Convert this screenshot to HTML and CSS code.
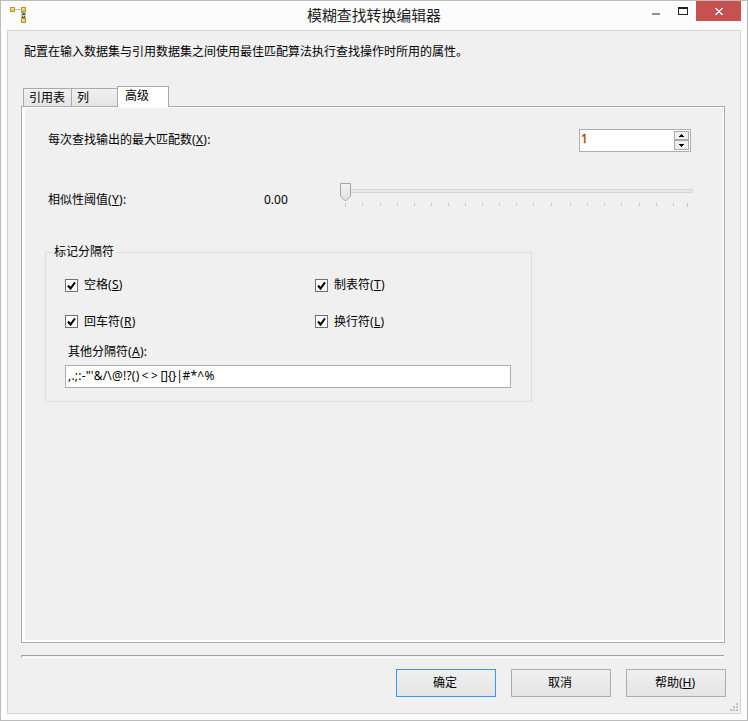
FILE: index.html
```html
<!DOCTYPE html>
<html lang="zh-CN">
<head>
<meta charset="utf-8">
<title>模糊查找转换编辑器</title>
<link rel="stylesheet" href="styles.css">
</head>
<body>
<div class="window">
  <header class="titlebar">
    <svg class="app-icon" width="18" height="18" viewBox="0 0 18 18" shape-rendering="crispEdges">
      <path d="M5 3.500h6" stroke="#c4c4c4"/>
      <path d="M11 6h5v6h-5z" fill="#c3cfc6"/>
      <path d="M12 6h1v1h-1zM13 7h2v1h-2zM12 8h3v1h-3zM12 10h1v1h-1zM14 10h1v1h-1zM12 11h3v1h-3z" fill="#3d664b"/>
      <g fill="#f5cc50" stroke="#bd963c"><path d="M.5 1.500h4v4h-4zM11.500 1.500h4v4h-4zM11.500 12.500h4v4h-4z"/></g>
      <path d="M1 2h2v1H1zM12 2h2v1h-2zM12 13h2v1h-2z" fill="#ffe991"/>
    </svg>
    <h1 class="title">模糊查找转换编辑器</h1>
    <div class="controls">
      <svg width="49" height="21" viewBox="0 0 49 21" shape-rendering="crispEdges">
        <path d="M5 12h8v2H5z" fill="#929292"/>
        <path d="M31 6h10v8H31zM32 8v5h8V8z" fill="#222326" fill-rule="evenodd"/>
      </svg>
      <div class="close">
        <svg width="8" height="7" viewBox="0 0 8 7" shape-rendering="crispEdges"><path fill="#fff" d="M0 0h2v1h1v1h2V1h1V0h2v1H7v1H6v1H5v1h1v1h1v1h1v1H6V6H5V5H3v1H2v1H0V6h1V5h1V4h1V3H2V2H1V1H0z"/></svg>
      </div>
    </div>
  </header>
  <main class="client">
    <p class="intro">配置在输入数据集与引用数据集之间使用最佳匹配算法执行查找操作时所用的属性。</p>
    <nav class="tabs">
      <div class="tab tab-ref">引用表</div>
      <div class="tab tab-col">列</div>
      <div class="tab tab-active">高级</div>
    </nav>
    <section class="page">
      <div class="match-row">
        <label>每次查找输出的最大匹配数<span class="key">(<u>X</u>):</span></label>
        <div class="spinner"><span class="spinner-value">1</span>
          <div class="arrows">
            <div class="arrow"><svg width="5" height="3" viewBox="0 0 5 3" shape-rendering="crispEdges"><path d="M2 0h1v1h1v1h1v1H0V2h1V1h1z"/></svg></div>
            <div class="arrow"><svg width="5" height="3" viewBox="0 0 5 3" shape-rendering="crispEdges"><path d="M0 0h5v1H4v1H3v1H2V2H1V1H0z"/></svg></div>
          </div>
        </div>
      </div>
      <div class="threshold-row">
        <label class="threshold-label">相似性阈值<span class="key">(<u>Y</u>):</span></label>
        <span class="threshold-value">0.00</span>
        <svg class="slider" width="354" height="26" viewBox="0 0 354 26">
          <defs><linearGradient id="thumb" x2="0" y2="1"><stop stop-color="#f2f2f2"/><stop offset="1" stop-color="#e2e2e2"/></linearGradient></defs>
          <path d="M5.500 7.500h347v3h-347z" fill="#e7eaea" stroke="#d3d6d5"/>
          <path d="M.5 1.500h10v12.500l-5 5-5-5z" fill="url(#thumb)" stroke="#a5a5a5"/>
          <path stroke="#c4c4c4" d="M5.500 21v4M22.500 21v3M40.500 21v3M57.500 21v3M74.500 21v3M91.500 21v3M108.500 21v3M125.500 21v3M142.500 21v3M159.500 21v3M176.500 21v3M193.500 21v3M211.500 21v3M230.500 21v3M247.500 21v3M264.500 21v3M281.500 21v3M299.500 21v3M316.500 21v3M333.500 21v3M347.500 21v4"/>
        </svg>
      </div>
      <div class="group">
        <span class="legend">标记分隔符</span>
        <div class="checks">
          <label class="check"><svg class="box" width="13" height="13" viewBox="0 0 13 13"><path d="M3 6.500l2.500 3L10 3.300" fill="none" stroke="#000" stroke-width="2"/></svg>空格<span class="key">(<u>S</u>)</span></label>
          <label class="check"><svg class="box" width="13" height="13" viewBox="0 0 13 13"><path d="M3 6.500l2.500 3L10 3.300" fill="none" stroke="#000" stroke-width="2"/></svg>制表符<span class="key">(<u>T</u>)</span></label>
          <label class="check check-low"><svg class="box" width="13" height="13" viewBox="0 0 13 13"><path d="M3 6.500l2.500 3L10 3.300" fill="none" stroke="#000" stroke-width="2"/></svg>回车符<span class="key">(<u>R</u>)</span></label>
          <label class="check check-low"><svg class="box" width="13" height="13" viewBox="0 0 13 13"><path d="M3 6.500l2.500 3L10 3.300" fill="none" stroke="#000" stroke-width="2"/></svg>换行符<span class="key">(<u>L</u>)</span></label>
        </div>
        <label class="other-label">其他分隔符<span class="key">(<u>A</u>):</span></label>
        <div class="field">,.;:-"'&amp;/\@!?()<span class="angles">&lt;&gt;</span><span class="brackets">[]{}|</span>#*^%</div>
      </div>
    </section>
    <div class="separator"></div>
    <footer class="buttons">
      <button class="button default">确定</button>
      <button class="button">取消</button>
      <button class="button">帮助(<u>H</u>)</button>
    </footer>
    <svg class="grip" width="8" height="8" viewBox="0 0 8 8" shape-rendering="crispEdges"><path fill="#bfbfbf" d="M6 0h2v2H6zM3 3h2v2H3zM6 3h2v2H6zM0 6h2v2H0zM3 6h2v2H3zM6 6h2v2H6z"/></svg>
  </main>
</div>
</body>
</html>
```
FILE: styles.css
```css
* { box-sizing: border-box; }
body {
  margin: 0;
  overflow: hidden;
  font: 12px/16px "Noto Sans", "Noto Sans CJK SC", sans-serif;
  color: #000;
}
svg { display: block; flex: none; }
u { text-underline-offset: 1px; text-decoration-thickness: 1px; text-decoration-skip-ink: none; }
.key { letter-spacing: 0.3px; }
.window {
  width: 748px;
  height: 721px;
  border: 1px solid #bbb;
  background: #fcfcfc;
}
.titlebar {
  display: grid;
  grid-template-columns: 99px 1fr 99px;
  height: 29px;
}
.app-icon { margin: 5px 0 0 9px; }
.title {
  margin: 4px 0 0;
  font-size: 14.9px;
  line-height: 20px;
  font-weight: 400;
  text-align: center;
  color: #222;
}
.controls { display: flex; margin-left: -1px; width: 99px; }
.close {
  display: flex;
  align-items: center;
  justify-content: center;
  flex: none;
  width: 45px;
  height: 20px;
  padding: 1px 0 0 1px;
  background: #c75050;
}
.client {
  position: relative;
  width: 734px;
  height: 684px;
  margin-left: 6px;
  padding: 13px 14px 0 13px;
  border: 1px solid #d3d3d3;
  background: #f0f0f0;
}
.intro { margin: 0 0 0 3px; white-space: nowrap; }
.tabs {
  display: flex;
  align-items: flex-end;
  height: 21px;
  margin: 26px 0 -1px 2px;
  position: relative;
}
.tab {
  height: 19px;
  padding: 1px 0 0 5px;
  border: 1px solid #aaa;
  background: linear-gradient(#f0f0f0, #e5e5e5);
}
.tab-ref { width: 49px; }
.tab-col { width: 47px; margin-left: -1px; }
.tab-active {
  width: 52px;
  height: 21px;
  margin-left: -1px;
  padding-left: 7px;
  border-bottom: 0;
  background: #fff;
}
.page {
  width: 704px;
  height: 537px;
  padding: 22px 0 0 20px;
  border: 1px solid #aaa;
  background: #f0f0f0;
  box-shadow: inset 3px 1px #fff, inset -1px -2px #fff;
}
.match-row {
  display: flex;
  justify-content: space-between;
  align-items: center;
  width: 649px;
  height: 23px;
  padding-left: 6px;
}
.match-row label { margin-top: -1px; }
.spinner {
  display: flex;
  justify-content: space-between;
  width: 112px;
  height: 23px;
  padding: 1px 1px 1px 1px;
  border: 1px solid #abadb3;
  background: #fff;
}
.spinner-value { color: #a95500; -webkit-text-stroke: 0.5px #a95500; }
.arrows { width: 15px; background: #f0f0f0; }
.arrow {
  display: flex;
  align-items: center;
  justify-content: center;
  height: 9px;
  border: 1px solid #aaa;
  background: #efefef;
}
.arrow + .arrow { height: 10px; }
.threshold-row {
  display: flex;
  align-items: center;
  height: 26px;
  margin-top: 30px;
  padding-left: 6px;
}
.threshold-label { width: 216px; margin-top: 9px; }
.threshold-value { width: 76px; margin-top: 9px; }
.group {
  width: 487px;
  height: 150px;
  margin: 44px 0 0 3px;
  border: 1px solid #dcdcdc;
  padding-left: 19px;
}
.legend {
  display: block;
  width: 64px;
  height: 16px;
  margin: -9px 0 0 -13px;
  padding-left: 2px;
  background: #f0f0f0;
}
.checks {
  display: grid;
  grid-template-columns: 250px 1fr;
  grid-auto-rows: 16px;
  row-gap: 20px;
  margin-top: 17px;
}
.check { display: flex; align-items: center; }
.box {
  margin: 1px 6px 0 0;
  background: #fff;
  box-shadow: inset 0 0 0 1px #707070;
}
.check-low { padding-top: 2px; }
.check-low .box { margin: -1px 6px 0 0; }
.other-label { display: block; margin: 15px 0 5px 3px; }
.field {
  width: 446px;
  height: 23px;
  padding: 2px 2px;
  border: 1px solid #abadb3;
  background: #fff;
  letter-spacing: 0.2px;
}
.angles { letter-spacing: 2.6px; margin-left: 2px; }
.brackets { letter-spacing: -0.3px; }
.separator {
  width: 703px;
  height: 3px;
  margin-top: 12px;
  border-top: 1px solid #a0a0a0;
  border-left: 1px solid #a0a0a0;
  border-bottom: 1px solid #fff;
}
.buttons { display: flex; gap: 15px; margin: 11px 0 0 375px; }
.button {
  width: 100px;
  height: 28px;
  flex: none;
  padding: 0 2px 1px 0;
  border: 1px solid #acacac;
  background: linear-gradient(#f0f0f0, #e4e4e4);
  font: inherit;
  color: #000;
}
.default { border-color: #3399ff; }
.grip { position: absolute; right: 2px; bottom: 2px; }
```
